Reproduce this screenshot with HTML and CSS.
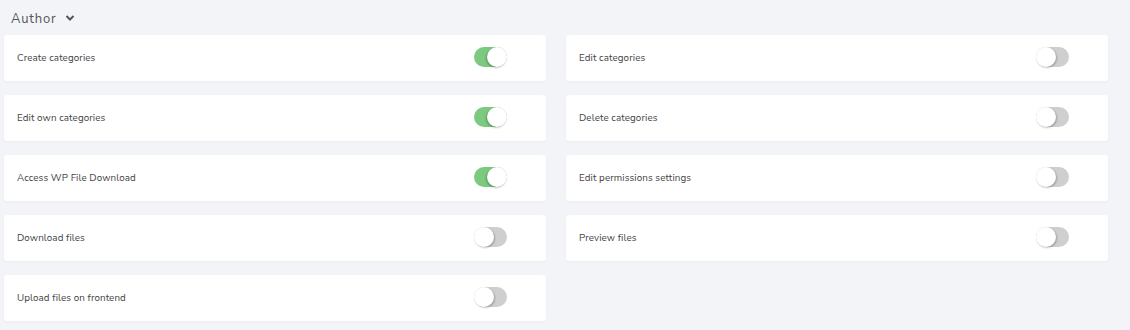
FILE: index.html
```html
<!DOCTYPE html>
<html>
<head>
<meta charset="utf-8">
<link rel="stylesheet" href="styles.css">
</head>
<body>
<div class="page">
  <div class="section-title">
    <span>Author</span>
    <svg class="chev" width="10" height="8" viewBox="0 0 10 8"><path d="M1.5 2 L5 5.5 L8.5 2" fill="none" stroke="#555" stroke-width="2"/></svg>
  </div>
  <div class="grid">
    <div class="card"><span class="label">Create categories</span><span class="toggle on"></span></div>
    <div class="card"><span class="label">Edit categories</span><span class="toggle"></span></div>
    <div class="card"><span class="label">Edit own categories</span><span class="toggle on"></span></div>
    <div class="card"><span class="label">Delete categories</span><span class="toggle"></span></div>
    <div class="card"><span class="label">Access WP File Download</span><span class="toggle on"></span></div>
    <div class="card"><span class="label">Edit permissions settings</span><span class="toggle"></span></div>
    <div class="card"><span class="label">Download files</span><span class="toggle"></span></div>
    <div class="card"><span class="label">Preview files</span><span class="toggle"></span></div>
    <div class="card"><span class="label">Upload files on frontend</span><span class="toggle"></span></div>
  </div>
</div>
</body>
</html>
```
FILE: styles.css
```css
* { box-sizing: border-box; }
html, body { margin: 0; padding: 0; }
body {
  background: #f3f4f8;
  font-family: "Nunito Sans", "Lato", "Open Sans", sans-serif;
  width: 1130px;
  height: 330px;
  overflow: hidden;
}
.page { padding: 0 0 0 4px; }
.section-title {
  height: 35px;
  display: flex;
  align-items: center;
  padding: 2px 0 0 7px;
  gap: 9px;
  font-size: 13px;
  letter-spacing: 0.8px;
  color: #555;
}
.chev { margin-top: -2px; }
.grid {
  display: grid;
  grid-template-columns: 542px 542px;
  column-gap: 20px;
  row-gap: 14px;
}
.card {
  height: 46px;
  background: #fff;
  border-radius: 3px;
  box-shadow: 0 1px 3px rgba(0,0,0,0.03);
  display: flex;
  align-items: center;
  justify-content: space-between;
  padding: 0 39px 2px 13px;
}
.label {
  font-size: 9.8px;
  color: #444;
  letter-spacing: 0.1px;
}
.toggle {
  position: relative;
  width: 33px;
  height: 20px;
  border-radius: 10px;
  background: #cfcfcf;
}
.toggle::after {
  content: "";
  position: absolute;
  top: 0;
  left: 0;
  width: 20px;
  height: 20px;
  border-radius: 50%;
  background: #fff;
  box-shadow: 1px 1px 2px rgba(0,0,0,0.25);
}
.toggle.on { background: #7cc97f; }
.toggle.on::after { left: 13px; box-shadow: -1px 1px 2px rgba(0,0,0,0.25); }
```
